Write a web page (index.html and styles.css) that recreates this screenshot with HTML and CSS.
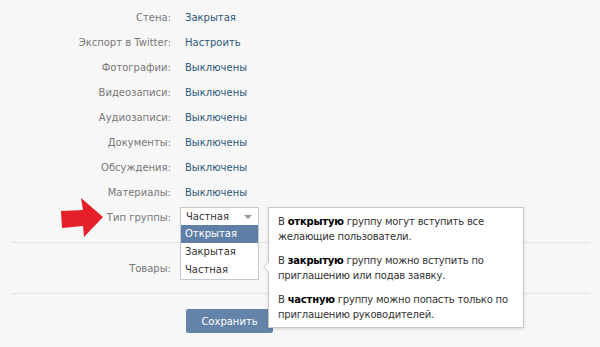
FILE: index.html
```html
<!DOCTYPE html>
<html lang="ru">
<head>
    <meta charset="UTF-8">
    <meta name="viewport" content="width=device-width, initial-scale=1.0">
    <title>Настройки сообщества</title>
    <link rel="stylesheet" href="styles.css">
</head>
<body>

    <div class="settings">
        <div class="row"><span class="label">Стена:</span><a class="value" href="#">Закрытая</a></div>
        <div class="row"><span class="label">Экспорт в Twitter:</span><a class="value" href="#">Настроить</a></div>
        <div class="row"><span class="label">Фотографии:</span><a class="value" href="#">Выключены</a></div>
        <div class="row"><span class="label">Видеозаписи:</span><a class="value" href="#">Выключены</a></div>
        <div class="row"><span class="label">Аудиозаписи:</span><a class="value" href="#">Выключены</a></div>
        <div class="row"><span class="label">Документы:</span><a class="value" href="#">Выключены</a></div>
        <div class="row"><span class="label">Обсуждения:</span><a class="value" href="#">Выключены</a></div>
        <div class="row"><span class="label">Материалы:</span><a class="value" href="#">Выключены</a></div>

        <div class="row type-row">
            <svg class="red-arrow" width="42" height="40" viewBox="0 0 42 40">
                <polygon points="0,13 22,12 20,0 42,19 23,39 22,28 1,30" fill="#e5202a"/>
            </svg>
            <span class="label">Тип группы:</span>
            <div class="select">
                <div class="select-head">Частная<span class="caret"></span></div>
                <ul class="select-list">
                    <li class="active">Открытая</li>
                    <li>Закрытая</li>
                    <li>Частная</li>
                </ul>
            </div>
            <div class="tip">
                <p>В <b>открытую</b> группу могут вступить все желающие пользователи.</p>
                <p>В <b>закрытую</b> группу можно вступить по приглашению или подав заявку.</p>
                <p>В <b>частную</b> группу можно попасть только по приглашению руководителей.</p>
            </div>
        </div>

        <div class="section">
            <div class="row"><span class="label">Товары:</span></div>
        </div>

        <div class="buttons">
            <button class="save-btn">Сохранить</button>
        </div>
    </div>

</body>
</html>
```

FILE: styles.css
```css
body {
    margin: 0;
    background-color: #f7f7f7;
    font-family: "DejaVu Sans", Tahoma, sans-serif;
    font-size: 10px;
    color: #333;
}
.settings {
    padding-top: 5px;
}
.row {
    display: flex;
    height: 25px;
    line-height: 25px;
}
.label {
    width: 171px;
    text-align: right;
    color: #777;
    flex-shrink: 0;
}
.value {
    margin-left: 14px;
    color: #2b587a;
    text-decoration: none;
}
.type-row {
    position: relative;
    height: 37px;
}
.red-arrow {
    position: absolute;
    left: 61px;
    top: -7px;
}
.select {
    position: relative;
    margin-left: 9px;
    margin-top: 2px;
}
.select-head {
    position: relative;
    width: 67px;
    height: 17px;
    line-height: 17px;
    padding: 0 5px;
    border: 1px solid #c0cad5;
    background: white;
    color: #333;
}
.caret {
    position: absolute;
    right: 6px;
    top: 7px;
    border-left: 4px solid transparent;
    border-right: 4px solid transparent;
    border-top: 4px solid #999;
}
.select-list {
    position: absolute;
    left: 0;
    top: 18px;
    width: 77px;
    margin: 0;
    padding: 0;
    list-style: none;
    background: white;
    border: 1px solid #c0cad5;
    border-top: none;
    z-index: 2;
}
.select-list li {
    height: 18px;
    line-height: 18px;
    padding: 0 4px;
    color: #333;
}
.select-list li.active {
    background-color: #5f7fa6;
    color: white;
}
.tip {
    position: absolute;
    left: 268px;
    top: 2px;
    width: 239px;
    padding: 6px 6px 5px 9px;
    background: white;
    border: 1px solid #c9c9c9;
    box-shadow: 0 1px 3px rgba(0, 0, 0, 0.15);
    line-height: 15px;
    letter-spacing: -0.2px;
    color: #333;
    z-index: 3;
}
.tip::before,
.tip::after {
    content: "";
    position: absolute;
    top: 54px;
    border-top: 5px solid transparent;
    border-bottom: 5px solid transparent;
}
.tip::before {
    left: -6px;
    border-right: 5px solid #c9c9c9;
}
.tip::after {
    left: -5px;
    border-right: 5px solid white;
}
.tip p {
    margin: 0 0 9px;
}
.tip p:last-child {
    margin-bottom: 0;
}
.tip b {
    color: #000;
}
.section {
    margin: 0 10px 0 12px;
    padding: 13px 0 12px;
    border-top: 1px solid #e3e3e3;
    border-bottom: 1px solid #e3e3e3;
}
.section .label {
    width: 159px;
}
.buttons {
    padding: 15px 0 0 186px;
}
.save-btn {
    width: 87px;
    height: 24px;
    background-color: #6383a8;
    color: white;
    font-family: "DejaVu Sans", Tahoma, sans-serif;
    font-size: 10px;
    border: none;
    border-radius: 2px;
    cursor: pointer;
}
```
